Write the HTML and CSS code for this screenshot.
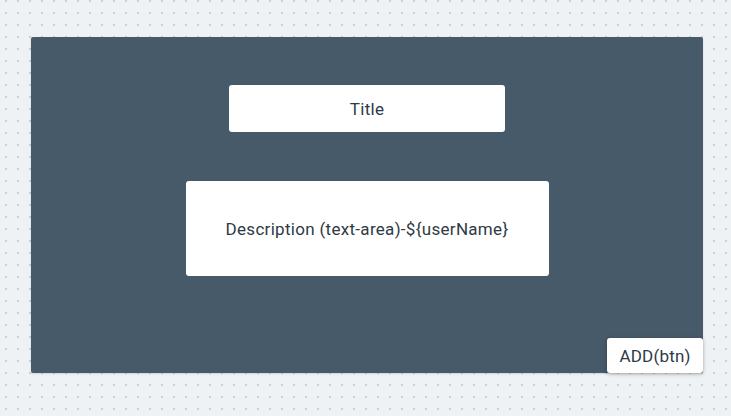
FILE: index.html
```html
<!DOCTYPE html>
<html>
<head>
<meta charset="utf-8">
<link rel="stylesheet" href="styles.css">
</head>
<body>
<div class="canvas">
  <div class="panel">
    <div class="field title">Title</div>
    <div class="field desc">Description (text-area)-${userName}</div>
    <div class="btn">ADD(btn)</div>
  </div>
</div>
</body>
</html>
```
FILE: styles.css
```css
html, body {
  margin: 0;
  padding: 0;
}
body {
  width: 731px;
  height: 416px;
  overflow: hidden;
  background-color: #eef2f5;
  background-image: radial-gradient(circle, #c9d1d8 0.9px, transparent 1.1px);
  background-size: 12px 12px;
  background-position: 0px -5px;
  font-family: Roboto, "Liberation Sans", sans-serif;
}
.canvas {
  padding: 37px 0 0 31px;
}
.panel {
  position: relative;
  box-sizing: border-box;
  width: 672px;
  height: 336px;
  background: #475a6a;
  border-radius: 2px;
  box-shadow: 0 1px 2px rgba(0,0,0,0.12);
  display: flex;
  flex-direction: column;
  align-items: center;
  padding-top: 48px;
  gap: 49px;
}
.field {
  background: #fff;
  border-radius: 3px;
  color: #2e3a45;
  font-size: 17px;
  letter-spacing: 0.3px;
  display: flex;
  align-items: center;
  justify-content: center;
  padding-top: 1px;
  box-sizing: border-box;
}
.title {
  width: 276px;
  height: 47px;
}
.desc {
  width: 363px;
  height: 95px;
}
.btn {
  position: absolute;
  right: 0;
  bottom: 0;
  width: 96px;
  height: 35px;
  background: #fff;
  border-radius: 3px;
  box-shadow: 0 1px 4px rgba(0,0,0,0.25);
  color: #2e3a45;
  font-size: 17px;
  letter-spacing: 0.2px;
  display: flex;
  align-items: center;
  justify-content: center;
  padding-top: 1px;
  box-sizing: border-box;
}
```
